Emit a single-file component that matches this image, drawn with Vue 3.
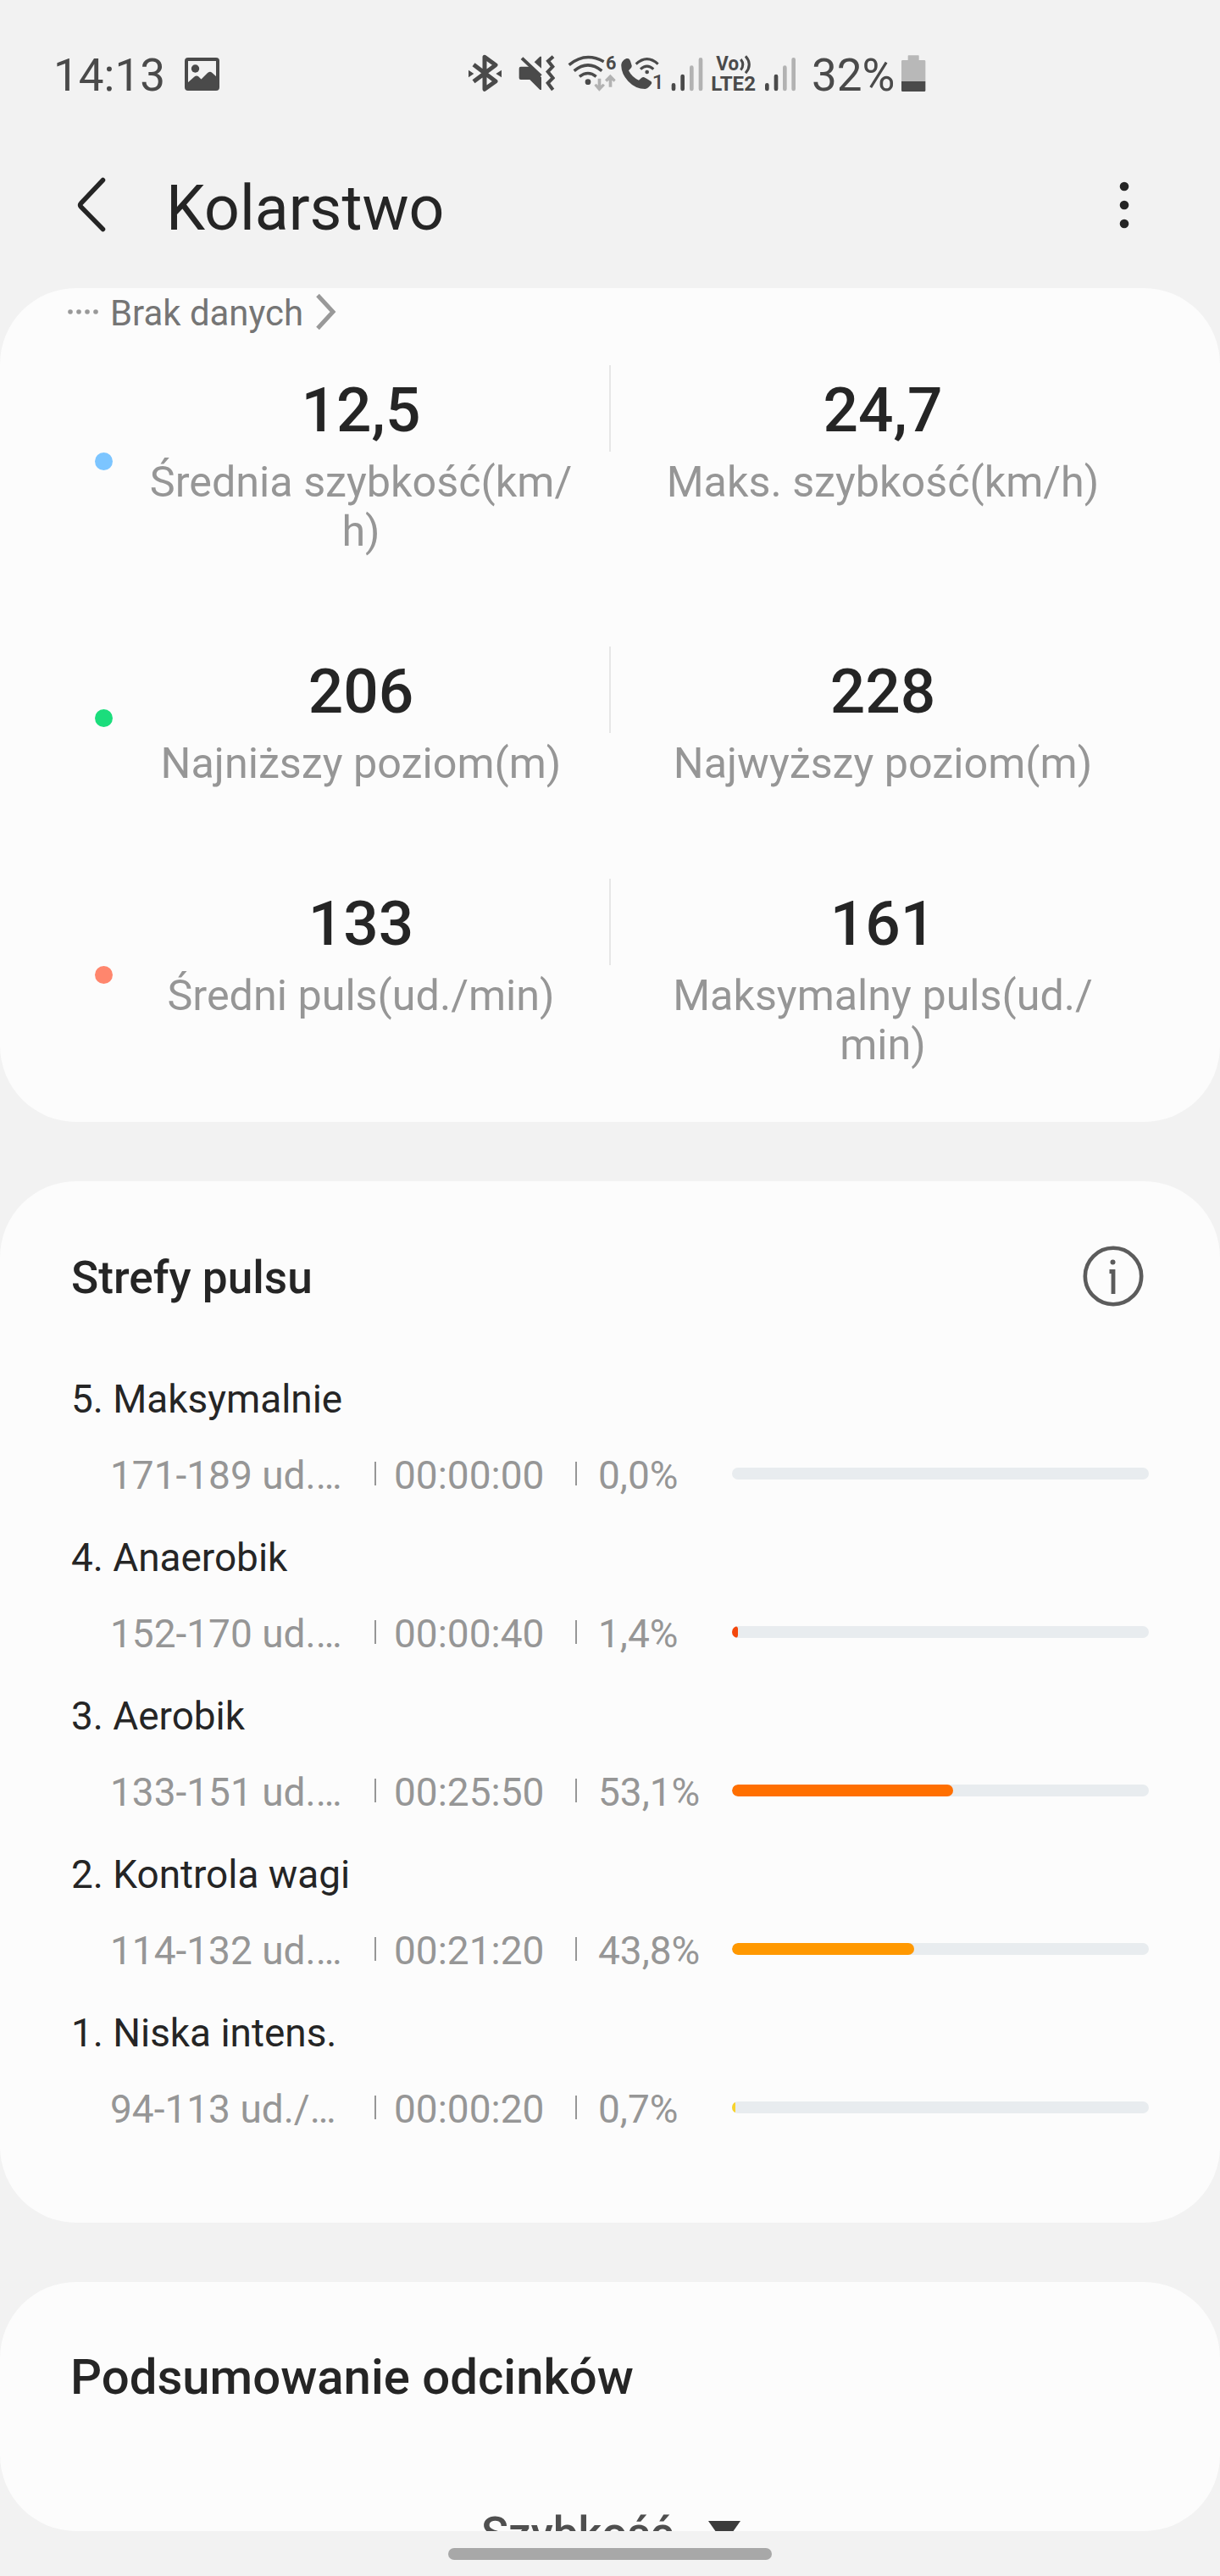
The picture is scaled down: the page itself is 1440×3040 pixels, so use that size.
<script setup>
const stats = [
  {
    left: { value: '12,5', lines: ['Średnia szybkość(km/', 'h)'] },
    right: { value: '24,7', lines: ['Maks. szybkość(km/h)'] },
  },
  {
    left: { value: '206', lines: ['Najniższy poziom(m)'] },
    right: { value: '228', lines: ['Najwyższy poziom(m)'] },
  },
  {
    left: { value: '133', lines: ['Średni puls(ud./min)'] },
    right: { value: '161', lines: ['Maksymalny puls(ud./', 'min)'] },
  },
]

const legend = ['#7cc5ff', '#1bdd7c', '#ff866d']

const zones = [
  { name: '5. Maksymalnie', range: '171-189 ud.…', time: '00:00:00', share: '0,0%', pct: 0, color: '#d32f2f' },
  { name: '4. Anaerobik', range: '152-170 ud.…', time: '00:00:40', share: '1,4%', pct: 1.4, color: '#f4470b' },
  { name: '3. Aerobik', range: '133-151 ud.…', time: '00:25:50', share: '53,1%', pct: 53.1, color: '#ff6f00' },
  { name: '2. Kontrola wagi', range: '114-132 ud.…', time: '00:21:20', share: '43,8%', pct: 43.8, color: '#ff9800' },
  { name: '1. Niska intens.', range: '94-113 ud./…', time: '00:00:20', share: '0,7%', pct: 0.9, color: '#f8d32c' },
]
</script>

<template>
  <div class="screen">
    <header class="status">
      <span class="clock">14:13</span>
      <svg class="i-image" width="41" height="39" viewBox="0 0 41 39">
        <rect x="2" y="2" width="37" height="35" rx="2" fill="none" stroke="#4a4a4a" stroke-width="4" />
        <circle cx="12.5" cy="13" r="4.7" fill="#4a4a4a" />
        <path d="M3 30 L11.5 22.5 Q14 20.500 16.500 22.500 L19.500 25.500 L26.500 18.500 Q29.500 15.500 32.500 18 L39 24 V37 H3Z" fill="#4a4a4a" />
      </svg>

      <svg class="i-bt" width="41" height="50" viewBox="66 30 123 150">
        <path d="M87 79 L165 138 L126 166 V52 L165 80 L87 139" fill="none" stroke="#4a4a4a" stroke-width="15" stroke-linejoin="round" />
        <path d="M69 98 L88 111 L69 124Z M186 98 L166 111 L186 124Z" fill="#4a4a4a" />
      </svg>

      <svg class="i-mute" width="43" height="50" viewBox="246 30 129 150">
        <path d="M258 56 L325 119" stroke="#4a4a4a" stroke-width="12" fill="none" />
        <path d="M254 86 H286 L327 124 V168 H322 L286 132 H254 Q248 132 248 126 V92 Q248 86 254 86Z" fill="#4a4a4a" />
        <path d="M302 70 L322 50 H327 V92Z" fill="#4a4a4a" />
        <path d="M369 50 L351 66 L367 86 L350 104 L368 126 L350 144 L368 168" fill="none" stroke="#4a4a4a" stroke-width="12" />
      </svg>

      <svg class="i-wifi" width="57" height="50" viewBox="420 30 171 150">
        <g fill="none" stroke="#4a4a4a" stroke-width="10.500">
          <path d="M425 80 Q482 32 548 68" />
          <path d="M443 101 Q492 60 541 101" />
          <path d="M462 121 Q492 98 521 121" />
        </g>
        <circle cx="492" cy="140" r="10" fill="#4a4a4a" />
        <text x="555" y="97" font-size="65" font-weight="700" fill="#4a4a4a">6</text>
        <path d="M527 128 H538 V152 L545 146 L552 152 L532 173 L514 152 L521 146 L527 152Z" fill="#b2b2b2" />
        <path d="M566 158 H577 V134 L584 140 L590 133 L571 113 L552 133 L559 140 L566 134Z" fill="#b2b2b2" />
      </svg>

      <svg class="i-call" width="54" height="60" viewBox="606 15 162 180">
        <path d="M628 57 L634 57 Q640 58 642 66 L647 82 Q648 88 643 92 L636 100 Q648 124 672 134 L682 125 Q688 121 694 125 L715 138 Q720 142 716 148 Q706 163 695 165 Q660 165 634 137 Q608 108 610 78 Q612 64 628 57Z" fill="#4a4a4a" />
        <g fill="none" stroke="#4a4a4a" stroke-width="9">
          <path d="M662 77 Q701 41 740 77" />
          <path d="M678 95 Q701 74 724 95" />
        </g>
        <circle cx="701" cy="105" r="7" fill="#4a4a4a" />
        <text x="719" y="166" font-size="74" font-weight="500" fill="#4a4a4a">1</text>
      </svg>

      <svg class="i-sig1" width="38" height="50" viewBox="786 30 114 150">
        <g fill="none" stroke-width="14" stroke-linecap="round">
          <path d="M795 151 V165 M827 120 V165" stroke="#4a4a4a" />
          <path d="M859 89 V165 M891 61 V165" stroke="#b2b2b2" />
        </g>
      </svg>

      <svg class="i-volte" width="54" height="60" viewBox="117 15 162 180">
        <text x="136" y="99" font-size="70" font-weight="700" textLength="80" lengthAdjust="spacingAndGlyphs" fill="#4a4a4a">Vo</text>
        <path d="M223 60 Q238 79 223 98 M240 49 Q266 79 240 109" fill="none" stroke="#4a4a4a" stroke-width="9" />
        <text x="118" y="171" font-size="74" font-weight="700" textLength="158" lengthAdjust="spacingAndGlyphs" fill="#4a4a4a">LTE2</text>
      </svg>

      <svg class="i-sig2" width="38" height="50" viewBox="306 30 114 150">
        <g fill="none" stroke-width="14" stroke-linecap="round">
          <path d="M316 151 V165 M348 120 V165" stroke="#4a4a4a" />
          <path d="M379 89 V165 M410 61 V165" stroke="#b2b2b2" />
        </g>
      </svg>

      <span class="charge">32%</span>
      <svg class="i-bat" width="30" height="50" viewBox="789 30 90 150">
        <path d="M817 46 H852 Q854 46 854 48 V63 H873 Q877 63 877 67 V138 H792 V67 Q792 63 796 63 H815 V48 Q815 46 817 46Z" fill="#b8b8b8" />
        <path d="M792 138 H877 V170 Q877 174 873 174 H796 Q792 174 792 170Z" fill="#4a4a4a" />
      </svg>
    </header>

    <nav class="appbar">
      <svg class="back" width="36" height="66" viewBox="0 0 36 66">
        <path d="M30.500 3.500 L4.500 31 Q2.500 33 4.500 35 L30.500 61.500" fill="none" stroke="#252525" stroke-width="5.500" stroke-linecap="round" stroke-linejoin="round" />
      </svg>
      <h1>Kolarstwo</h1>
      <svg class="more" width="12" height="56" viewBox="0 0 12 56">
        <circle cx="6" cy="6" r="5.300" fill="#252525" />
        <circle cx="6" cy="28" r="5.300" fill="#252525" />
        <circle cx="6" cy="50" r="5.300" fill="#252525" />
      </svg>
    </nav>

    <section class="card summary">
      <div class="nodata">
        <svg width="38" height="8" viewBox="0 0 38 8">
          <g fill="#999"><circle cx="4" cy="4" r="2.800" /><circle cx="14" cy="4" r="2.800" /><circle cx="24" cy="4" r="2.800" /><circle cx="34" cy="4" r="2.800" /></g>
        </svg>
        <span>Brak danych</span>
        <svg class="chev" width="26" height="44" viewBox="0 0 26 44">
          <path d="M3 2.500 L21 22 L3 41.500" fill="none" stroke="#999" stroke-width="5" />
        </svg>
      </div>
      <div class="stats">
        <div class="legend">
          <i v-for="c in legend" :key="c" :style="{ background: c }"></i>
        </div>
        <div class="rows">
          <div v-for="(row, n) in stats" :key="n" class="row">
            <div class="cell">
              <strong>{{ row.left.value }}</strong>
              <span v-for="l in row.left.lines" :key="l">{{ l }}</span>
            </div>
            <div class="divider"></div>
            <div class="cell">
              <strong>{{ row.right.value }}</strong>
              <span v-for="l in row.right.lines" :key="l">{{ l }}</span>
            </div>
          </div>
        </div>
      </div>
    </section>

    <section class="card zones">
      <div class="zhead">
        <h2>Strefy pulsu</h2>
        <svg width="72" height="72" viewBox="0 0 72 72">
          <circle cx="36" cy="36" r="33.200" fill="none" stroke="#5c5c5c" stroke-width="4.600" />
          <circle cx="35.500" cy="19.500" r="3" fill="#5c5c5c" />
          <path d="M31.500 30.500 H36 V57" fill="none" stroke="#5c5c5c" stroke-width="4.800" />
        </svg>
      </div>
      <div v-for="z in zones" :key="z.name" class="zone">
        <div class="zname">{{ z.name }}</div>
        <div class="zdetail">
          <span>{{ z.range }}</span>
          <i class="sep"></i>
          <span class="ztime">{{ z.time }}</span>
          <i class="sep"></i>
          <span class="zshare">{{ z.share }}</span>
          <div class="track"><div class="fill" :style="{ width: z.pct + '%', background: z.color }"></div></div>
        </div>
      </div>
    </section>

    <section class="card laps">
      <h2>Podsumowanie odcinków</h2>
      <div class="select">
        <span>Szybkość</span>
        <svg width="38" height="28" viewBox="0 0 38 28"><path d="M0 0 H38 L19 27Z" fill="#3b3b3b" /></svg>
      </div>
    </section>

    <div class="homebar"></div>
  </div>
</template>

<style>
body {
  margin: 0;
  background: #f2f2f2;
}
</style>

<style scoped>
.screen {
  display: flex;
  flex-direction: column;
  width: 1440px;
  height: 3040px;
  overflow: hidden;
  background: #f2f2f2;
  color: #252525;
  font-family: Roboto, "Noto Sans", sans-serif;
}
svg {
  display: block;
  flex: none;
}
h1,
h2 {
  margin: 0;
}
.status {
  display: flex;
  align-items: center;
  height: 170px;
  padding-left: 63px;
  box-sizing: border-box;
  color: #4a4a4a;
  font-size: 53px;
  line-height: 60px;
  white-space: nowrap;
}
.clock {
  width: 155px;
  padding-top: 8px;
}
.i-image { margin: 4px 293px 0 0; }
.i-bt { margin-right: 19px; }
.i-mute { margin-right: 15px; }
.i-wifi { margin-right: 5px; }
.i-call { margin-right: 6px; }
.i-sig1 { margin-right: 9px; }
.i-volte { margin-right: 9px; }
.i-sig2 { margin-right: 18px; }
.charge {
  width: 105px;
  padding-top: 8px;
}
.appbar {
  display: flex;
  align-items: center;
  flex: none;
  height: 144px;
  margin-bottom: 26px;
}
.back {
  margin-left: 91px;
}
h1 {
  flex: 1;
  margin-left: 69px;
  padding-top: 8px;
  font-size: 73.400px;
  font-weight: 400;
  line-height: 86px;
}
.more {
  margin-right: 107px;
}
.card {
  flex: none;
  box-sizing: border-box;
  overflow: hidden;
  border-radius: 90px;
  background: #fcfcfc;
}
.summary {
  height: 984px;
  margin-bottom: 70px;
}
.nodata {
  display: flex;
  align-items: center;
  height: 55px;
  padding-left: 79px;
  color: #757575;
  font-size: 41.900px;
  line-height: 48px;
}
.nodata span {
  margin-left: 13px;
  padding-top: 4px;
}
.chev {
  margin-left: 14px;
}
.stats {
  display: flex;
  margin-top: 36px;
}
.legend {
  display: flex;
  flex-direction: column;
  gap: 282px;
  width: 169px;
  padding: 103px 0 0 112px;
  box-sizing: border-box;
}
.legend i {
  width: 21px;
  height: 21px;
  border-radius: 50%;
}
.row {
  display: grid;
  grid-template-columns: 514px 102px 514px;
  padding-bottom: 107px;
}
.row:last-child {
  padding-bottom: 0;
}
.divider {
  width: 2px;
  height: 102px;
  margin-left: 36px;
  background: #e6e6e6;
}
.cell {
  display: flex;
  flex-direction: column;
  align-items: center;
  padding-top: 10px;
}
.cell strong {
  height: 86px;
  margin-bottom: 13px;
  font-size: 73px;
  font-weight: 500;
  line-height: 86px;
}
.cell span {
  color: #969696;
  font-size: 50.300px;
  line-height: 58px;
  white-space: nowrap;
}
.zones {
  height: 1229px;
  margin-bottom: 70px;
  padding: 0 84px;
}
.zhead {
  display: flex;
  align-items: center;
  justify-content: space-between;
  height: 224px;
  margin-bottom: 6px;
  padding-right: 6px;
}
.zhead h2 {
  padding-top: 4px;
  font-size: 53.200px;
  font-weight: 500;
  line-height: 62px;
}
.zone {
  height: 187px;
}
.zname {
  margin-bottom: 34px;
  font-size: 45.900px;
  line-height: 54px;
}
.zdetail {
  display: grid;
  grid-template-columns: 312px 2px 235px 2px 183px 492px;
  align-items: center;
  height: 54px;
  margin-left: 46px;
  color: #969696;
  font-size: 46px;
  line-height: 48px;
  white-space: nowrap;
}
.zdetail span {
  padding-top: 4px;
}
.zdetail .ztime {
  padding-left: 21px;
}
.zdetail .zshare {
  padding-left: 25px;
}
.sep {
  width: 2px;
  height: 28px;
  background: #969696;
}
.track {
  height: 14px;
  overflow: hidden;
  border-radius: 7px;
  background: #e8ecef;
}
.fill {
  height: 14px;
  border-radius: 7px;
}
.laps {
  height: 294px;
  padding: 77px 83px 0;
}
.laps h2 {
  margin-bottom: 120px;
  font-size: 58.100px;
  font-weight: 500;
  line-height: 70px;
}
.select {
  display: flex;
  padding-left: 485px;
  color: #4f4f4f;
  font-size: 53px;
  font-weight: 500;
  line-height: 60px;
}
.select span {
  width: 268px;
}
.select svg {
  margin-top: 15px;
}
.homebar {
  flex: none;
  width: 382px;
  height: 14px;
  margin: 20px 0 0 529px;
  border-radius: 7px;
  background: #a8a8a8;
}
</style>
